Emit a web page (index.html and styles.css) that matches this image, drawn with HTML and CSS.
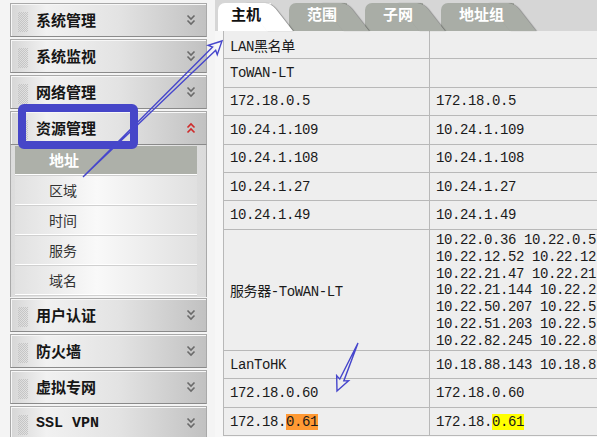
FILE: index.html
```html
<!DOCTYPE html>
<html lang="zh">
<head>
<meta charset="utf-8">
<title>地址 - 主机</title>
<link rel="stylesheet" href="styles.css">
</head>
<body>
<div class="page">
  <nav class="sidebar">
    <div class="menu-head"><span class="grip"></span><span class="label">系统管理</span><svg class="chev" viewBox="0 0 10 12"><path d="M1.5 1.5L5 5l3.5-3.5M1.5 6.5L5 10l3.5-3.5"/></svg></div>
    <div class="menu-head"><span class="grip"></span><span class="label">系统监视</span><svg class="chev" viewBox="0 0 10 12"><path d="M1.5 1.5L5 5l3.5-3.5M1.5 6.5L5 10l3.5-3.5"/></svg></div>
    <div class="menu-head"><span class="grip"></span><span class="label">网络管理</span><svg class="chev" viewBox="0 0 10 12"><path d="M1.5 1.5L5 5l3.5-3.5M1.5 6.5L5 10l3.5-3.5"/></svg></div>
    <div class="menu-head open"><span class="grip"></span><span class="label">资源管理</span><svg class="chev up" viewBox="0 0 10 12"><path d="M1.5 5.5L5 2l3.5 3.5M1.5 10.5L5 7l3.5 3.5"/></svg></div>
    <ul class="submenu">
      <li class="sub active">地址</li>
      <li class="sub">区域</li>
      <li class="sub">时间</li>
      <li class="sub">服务</li>
      <li class="sub">域名</li>
    </ul>
    <div class="menu-head"><span class="grip"></span><span class="label">用户认证</span><svg class="chev" viewBox="0 0 10 12"><path d="M1.5 1.5L5 5l3.5-3.5M1.5 6.5L5 10l3.5-3.5"/></svg></div>
    <div class="menu-head"><span class="grip"></span><span class="label">防火墙</span><svg class="chev" viewBox="0 0 10 12"><path d="M1.5 1.5L5 5l3.5-3.5M1.5 6.5L5 10l3.5-3.5"/></svg></div>
    <div class="menu-head"><span class="grip"></span><span class="label">虚拟专网</span><svg class="chev" viewBox="0 0 10 12"><path d="M1.5 1.5L5 5l3.5-3.5M1.5 6.5L5 10l3.5-3.5"/></svg></div>
    <div class="menu-head"><span class="grip"></span><span class="label">SSL VPN</span><svg class="chev" viewBox="0 0 10 12"><path d="M1.5 1.5L5 5l3.5-3.5M1.5 6.5L5 10l3.5-3.5"/></svg></div>
  </nav>
  <main class="content">
    <div class="tabs">
      <div class="tab active t1">主机</div>
      <div class="tab t2">范围</div>
      <div class="tab t3">子网</div>
      <div class="tab t4">地址组</div>
    </div>
    <table class="grid">
      <colgroup><col class="c1"><col class="c2"></colgroup>
      <tr><td>LAN黑名单</td><td></td></tr>
      <tr><td>ToWAN-LT</td><td></td></tr>
      <tr><td>172.18.0.5</td><td>172.18.0.5</td></tr>
      <tr><td>10.24.1.109</td><td>10.24.1.109</td></tr>
      <tr><td>10.24.1.108</td><td>10.24.1.108</td></tr>
      <tr><td>10.24.1.27</td><td>10.24.1.27</td></tr>
      <tr><td>10.24.1.49</td><td>10.24.1.49</td></tr>
      <tr class="multi"><td>服务器-ToWAN-LT</td><td class="lines"><div>10.22.0.36 10.22.0.5</div><div>10.22.12.52 10.22.12</div><div>10.22.21.47 10.22.21</div><div>10.22.21.144 10.22.2</div><div>10.22.50.207 10.22.5</div><div>10.22.51.203 10.22.5</div><div>10.22.82.245 10.22.8</div></td></tr>
      <tr><td>LanToHK</td><td>10.18.88.143 10.18.8</td></tr>
      <tr><td>172.18.0.60</td><td>172.18.0.60</td></tr>
      <tr><td>172.18.<mark class="hl-orange">0.61</mark></td><td>172.18.<mark class="hl-yellow">0.61</mark></td></tr>
    </table>
  </main>
</div>
<div class="callout"></div>
<svg class="arrows" viewBox="0 0 597 437">
  <polygon points="0,0 183.5,-2.2 181.5,-6.5 194.5,0 181.5,6.5 183.5,2.2" transform="translate(83 177) rotate(-44.38)"/>
  <polygon points="0,0 40.4,-2.2 38.4,-6.5 52.4,0 38.4,6.5 40.4,2.2" transform="translate(358 343) rotate(113.63)"/>
</svg>
</body>
</html>
```
FILE: styles.css
```css
html, body {
  margin: 0;
  padding: 0;
}
body {
  width: 597px;
  height: 437px;
  overflow: hidden;
  position: relative;
  background: #f4f4f4;
  font-family: "Noto Sans CJK SC", sans-serif;
}
.page {
  display: flex;
  align-items: flex-start;
}

/* ---------- sidebar ---------- */
.sidebar {
  flex: none;
  width: 197px;
  margin-left: 10px;
  padding-top: 3px;
}
.menu-head {
  box-sizing: border-box;
  height: 34px;
  margin-bottom: 2px;
  display: flex;
  align-items: center;
  border: 1px solid #a9a9a9;
  border-bottom-color: #8a8a8a;
  background: linear-gradient(to right, #d6d6d6 0%, #f1f1f1 18%, #e3e3e3 55%, #c1c1c1 100%);
  box-shadow: inset 1px 1px 0 #f7f7f7;
}
.menu-head.open {
  margin-bottom: 0;
}
.grip {
  flex: none;
  width: 10px;
  height: 20px;
  margin-left: 7px;
  margin-top: 3px;
  background: repeating-conic-gradient(#c5c5c5 0 25%, transparent 0 50%) 0 0 / 2px 2px;
}
.label {
  flex: 1;
  margin-left: 8px;
  font: bold 15px "Liberation Mono", "Noto Sans CJK SC", monospace;
  color: #161616;
}
.chev {
  flex: none;
  width: 10px;
  height: 12px;
  margin-right: 10px;
}
.chev path {
  fill: none;
  stroke: #6a6a6a;
  stroke-width: 1.6;
}
.chev.up path {
  stroke: #d02a2a;
}
.submenu {
  list-style: none;
  margin: 0 0 1px;
  padding: 1px 9px 1px 4px;
  border-left: 1px solid #a9a9a9;
  border-right: 1px solid #a9a9a9;
  background: linear-gradient(to right, #dcdcdc, #f5f5f5 45%, #dadada);
}
.sub {
  height: 28px;
  line-height: 28px;
  padding-left: 34px;
  margin-bottom: 1px;
  font-size: 14px;
  color: #333;
  border-bottom: 1px solid #fff;
  box-shadow: 0 1px 0 #d0d0d0;
  background: linear-gradient(to right, #e1e1e1, #f9f9f9 45%, #e0e0e0);
}
.sub.active {
  background: #adb0a9;
  color: #fff;
  font-weight: bold;
  font-size: 15px;
}

/* ---------- content ---------- */
.content {
  flex: 1;
  min-width: 0;
  margin-left: 8px;
  height: 437px;
  overflow: hidden;
  background: #f7f7f7;
}
.tabs {
  display: flex;
  box-sizing: border-box;
  height: 31px;
  padding: 3px 0 0 3px;
  background: #d6d6d6;
}
.tab {
  position: relative;
  height: 28px;
  line-height: 28px;
  padding: 0 10px 0 18px;
  margin-right: 18px;
  background: #a9ada6;
  color: #fff;
  font: bold 15px "Noto Sans CJK SC", sans-serif;
  border-top-left-radius: 7px;
}
.tab::after {
  content: "";
  position: absolute;
  top: 0;
  right: -22px;
  width: 26px;
  height: 100%;
  background: inherit;
  transform: skewX(38deg);
  transform-origin: bottom left;
  border-top-right-radius: 6px;
  box-shadow: 1px 0 1px rgba(0, 0, 0, 0.35);
  z-index: -1;
}
.tab.active {
  background: #fff;
  color: #111;
  padding-left: 13px;
}
.t1 { z-index: 4; }
.t2 { z-index: 3; }
.t3 { z-index: 2; }
.t4 { z-index: 1; }

.grid {
  margin-left: 8px;
  border-collapse: separate;
  border-spacing: 0;
  table-layout: fixed;
  width: 374px;
  border-left: 1px solid #b8b8b8;
  background: #eeeeee;
  font: 14px "Liberation Mono", "Noto Sans CJK SC", monospace;
  letter-spacing: -0.4px;
  color: #1a1a1a;
}
.grid col.c1 { width: 206px; }
.grid col.c2 { width: 167px; }
.grid td {
  box-sizing: border-box;
  height: 28.4px;
  padding: 0 0 0 6px;
  border-right: 1px solid #b8b8b8;
  border-bottom: 1px solid #b8b8b8;
  white-space: nowrap;
  overflow: hidden;
  vertical-align: middle;
}
.grid td:last-child {
  border-right: none;
}
.grid td.lines {
  padding-top: 2px;
  line-height: 16.9px;
}
mark {
  color: inherit;
  padding: 0;
}
.hl-orange { background: #ff9933; }
.hl-yellow { background: #ffff00; }

/* ---------- annotations ---------- */
.callout {
  position: absolute;
  left: 18px;
  top: 104px;
  width: 120px;
  height: 45px;
  box-sizing: border-box;
  border: 8px solid #4646c8;
  border-radius: 6px;
}
.arrows {
  position: absolute;
  left: 0;
  top: 0;
  width: 597px;
  height: 437px;
  pointer-events: none;
}
.arrows polygon {
  fill: none;
  stroke: #4646cc;
  stroke-width: 1.4;
}
```
